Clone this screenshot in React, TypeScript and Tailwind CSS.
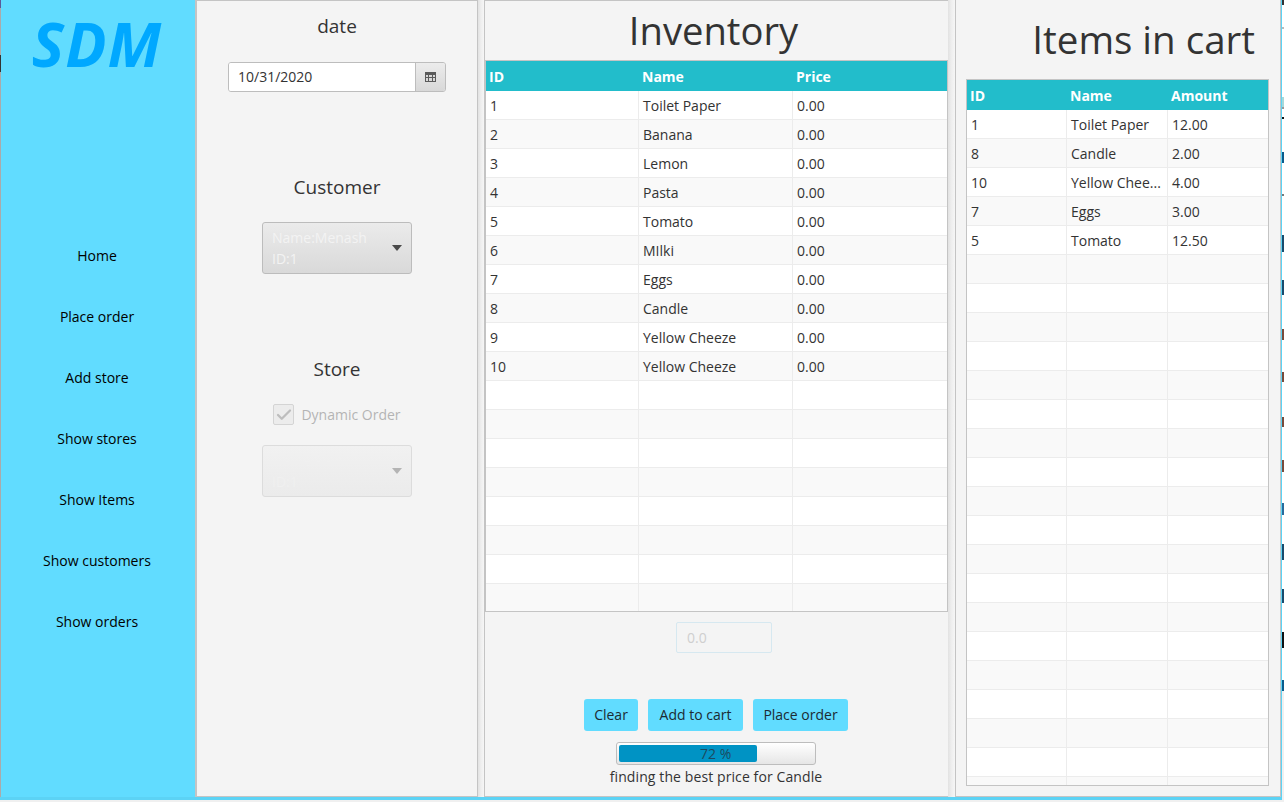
import { Check } from "lucide-react";

const inventory = [
  ["1", "Toilet Paper", "0.00"],
  ["2", "Banana", "0.00"],
  ["3", "Lemon", "0.00"],
  ["4", "Pasta", "0.00"],
  ["5", "Tomato", "0.00"],
  ["6", "MIlki", "0.00"],
  ["7", "Eggs", "0.00"],
  ["8", "Candle", "0.00"],
  ["9", "Yellow Cheeze", "0.00"],
  ["10", "Yellow Cheeze", "0.00"],
];

const cart = [
  ["1", "Toilet Paper", "12.00"],
  ["8", "Candle", "2.00"],
  ["10", "Yellow Chee...", "4.00"],
  ["7", "Eggs", "3.00"],
  ["5", "Tomato", "12.50"],
];

const navItems = ["Home", "Place order", "Add store", "Show stores", "Show Items", "Show customers", "Show orders"];

// slivers of the window behind, cut off by the right edge
const behind = [
  "h-[5px] bg-[#333333]",
  "mt-[22px] h-[2px] bg-[#bbbbbb]",
  "mt-[68px] h-[10px] bg-[#a8d8d8]",
  "h-[2px] bg-[#999999]",
  "mt-[8px] h-[2px] bg-[#111111]",
  "mt-[33px] h-[11px] bg-[#0b5a8a]",
  "mt-[31px] h-[2px] bg-[#777777]",
  "mt-[39px] h-[17px] bg-[#1b4a6b]",
  "mt-[28px] h-[15px] bg-[#1b4a6b]",
  "mt-[34px] h-[11px] bg-[#7a4a3a]",
  "mt-[32px] h-[10px] bg-[#7a4a3a]",
  "mt-[35px] h-[10px] bg-[#7a4a3a]",
  "mt-[33px] h-[12px] bg-[#7a4a3a]",
  "mt-[31px] h-[12px] bg-[#2a6a9a]",
  "mt-[29px] h-[16px] bg-[#1b4a6b]",
  "mt-[29px] h-[14px] bg-[#1b4a6b]",
  "mt-[29px] h-[16px] bg-[#111111]",
  "mt-[32px] h-[11px] bg-[#0b5a8a]",
];

function DataTable({
  headers,
  rows,
  rowCount,
  colClass,
  heightClass,
}: {
  headers: string[];
  rows: string[][];
  rowCount: number;
  colClass: string;
  heightClass: string;
}) {
  const all = Array.from({ length: rowCount }, (_, i) => rows[i] ?? ["", "", ""]);
  return (
    <div className={`border border-[#c4c4c4] overflow-hidden bg-white ${heightClass}`}>
      <div className={`grid ${colClass} h-[30px] bg-[#22bdcb] text-white font-bold items-center`}>
        {headers.map((h) => (
          <div key={h} className="pl-[3px]">{h}</div>
        ))}
      </div>
      {all.map((row, i) => (
        <div key={i} className={`grid ${colClass} h-[29px] border-b border-[#ececec] ${i % 2 ? "bg-[#f9f9f9]" : "bg-white"}`}>
          {row.map((cell, j) => (
            <div key={j} className="pl-[4px] flex items-center border-r border-[#ececec] last:border-r-0 whitespace-nowrap overflow-hidden">
              {cell}
            </div>
          ))}
        </div>
      ))}
    </div>
  );
}

function FxButton({ children, widthClass }: { children: string; widthClass: string }) {
  return <button className={`h-8 pb-[2px] rounded-[3px] bg-[#61dcff] text-[#1c2b33] ${widthClass}`}>{children}</button>;
}

function ComboBox({ lines, faded }: { lines: string[]; faded?: boolean }) {
  return (
    <div
      className={`w-[150px] h-[52px] rounded-[3px] border flex items-center pl-[9px] pr-[9px] bg-gradient-to-b ${
        faded ? "border-[#dcdcdc] from-[#f1f1f1] to-[#ebebeb]" : "border-[#bcbcbc] from-[#ebebeb] to-[#d9d9d9]"
      }`}
    >
      <div className={`flex-1 leading-[21px] ${faded ? "text-[#f0f0f0]" : "text-[#f3f3f3]"}`}>
        {lines.map((l) => (
          <div key={l}>{l}</div>
        ))}
      </div>
      <div className={`w-0 h-0 border-x-[5px] border-x-transparent border-t-[6px] ${faded ? "border-t-[#b4b4b4]" : "border-t-[#4a4a4a]"}`} />
    </div>
  );
}

function Splitter({ widthClass }: { widthClass: string }) {
  return <div className={`shrink-0 bg-gradient-to-r from-[#e2e2e2] via-[#eeeeee] to-[#f6f6f6] ${widthClass}`} />;
}

export default function App() {
  return (
    <div className="w-[1284px] h-[802px] flex items-start overflow-hidden bg-[#f0f0f0] text-[14px] text-[#333333] font-['Open_Sans','Noto_Sans',sans-serif]">
      <div className="w-[1282px] h-[800px] shrink-0 flex border-r-2 border-b-[3px] border-[#5cd3f5] bg-[#f4f4f4]">
        {/* sidebar */}
        <aside className="relative w-[195px] shrink-0 bg-[#61dcff] flex flex-col items-center pr-[2px] text-black border-l border-[#aaaaaa]">
          <span className="absolute -left-px top-0 w-px h-2 bg-[#5a5a9a]" />
          <span className="absolute -left-px top-[55px] w-px h-[17px] bg-[#333333]" />
          <div className="h-[88px] pt-[9px] text-[61px] leading-[70px] font-bold italic tracking-[1px] text-[#00a8ff]">SDM</div>
          <nav className="mt-[158px] flex flex-col items-center gap-[41px]">
            {navItems.map((n) => (
              <div key={n} className="h-5 leading-5">{n}</div>
            ))}
          </nav>
        </aside>

        {/* order details */}
        <section className="w-[283px] shrink-0 border-l-2 border-r border-t border-b border-[#c4c4c4] flex flex-col items-center">
          <div className="mt-[13px] text-[19px] leading-6">date</div>
          <div className="mt-[24px] w-[218px] h-[30px] flex rounded-[3px] border border-[#bdbdbd] overflow-hidden">
            <div className="flex-1 bg-white pl-[9px] pb-[2px] flex items-center">10/31/2020</div>
            <div className="w-[30px] border-l border-[#bdbdbd] bg-gradient-to-b from-[#ececec] to-[#d8d8d8] flex items-center justify-center">
              <svg width="11" height="10" viewBox="0 0 11 10">
                <rect width="11" height="10" fill="#5a5a5a" />
                <g fill="#d8d8d8">
                  <rect x="1" y="3" width="2" height="2" /><rect x="4" y="3" width="3" height="2" /><rect x="8" y="3" width="2" height="2" />
                  <rect x="1" y="6" width="2" height="3" /><rect x="4" y="6" width="3" height="3" /><rect x="8" y="6" width="2" height="3" />
                </g>
              </svg>
            </div>
          </div>
          <div className="mt-[83px] text-[19px] leading-6">Customer</div>
          <div className="mt-[23px]"><ComboBox lines={["Name:Menash", "ID:1"]} /></div>
          <div className="mt-[83px] text-[19px] leading-6">Store</div>
          <div className="mt-[23px] flex items-center gap-[7px] text-[#b4b4b4]">
            <div className="w-[21px] h-[21px] rounded-[2px] border border-[#d4d4d4] bg-[#ececec] flex items-center justify-center">
              <Check size={18} strokeWidth={3} className="text-[#bdbdbd]" />
            </div>
            <span>Dynamic Order</span>
          </div>
          <div className="mt-[20px]"><ComboBox lines={["Name:Rami", "ID:1"]} faded /></div>
        </section>

        <Splitter widthClass="w-[6px]" />

        {/* inventory */}
        <section className="w-[464px] shrink-0 border-l border-t border-b border-[#c4c4c4] flex flex-col items-center">
          <h1 className="h-[59px] pt-[3px] pr-[6px] text-[38.2px] leading-[52px]">Inventory</h1>
          <div className="w-full">
            <DataTable
              headers={["ID", "Name", "Price"]}
              rows={inventory}
              rowCount={18}
              colClass="grid-cols-[153px_154px_154px]"
              heightClass="h-[552px]"
            />
          </div>
          <div className="mt-[10px] ml-[15px] w-[96px] h-[31px] border border-[#d6e8f0] rounded-[2px] pl-[10px] flex items-center text-[#cfcfcf]">0.0</div>
          <div className="mt-[46px] mr-[1px] flex gap-[10px]">
            <FxButton widthClass="w-[54px]">Clear</FxButton>
            <FxButton widthClass="w-[95px]">Add to cart</FxButton>
            <FxButton widthClass="w-[95px]">Place order</FxButton>
          </div>
          <div className="mt-[11px] mr-[1px] w-[200px] h-[23px] border border-[#bdbdbd] rounded-[3px] p-[2px] bg-gradient-to-b from-[#ffffff] to-[#e6e6e6]">
            <div className="w-[138px] h-[17px] rounded-[2px] bg-[#0093c4] text-[#1c4a60] leading-[17px] pl-[81px] whitespace-nowrap">72 %</div>
          </div>
          <div className="mt-[2px] mr-[1px] leading-5 tracking-[0.1px]">finding the best price for Candle</div>
        </section>

        <Splitter widthClass="w-[7px]" />

        {/* cart */}
        <section className="flex-1 border-l border-r border-b border-[#c4c4c4] flex flex-col pl-[10px] pr-[11px]">
          <h1 className="h-[79px] pt-[13px] text-right pr-[14px] text-[38.5px] leading-[52px]">Items in cart</h1>
          <DataTable
            headers={["ID", "Name", "Amount"]}
            rows={cart}
            rowCount={24}
            colClass="grid-cols-[100px_101px_100px]"
            heightClass="h-[707px]"
          />
        </section>
      </div>
      <div className="w-[2px] shrink-0 bg-white flex flex-col">
        {behind.map((c, i) => (
          <div key={i} className={c} />
        ))}
      </div>
    </div>
  );
}
